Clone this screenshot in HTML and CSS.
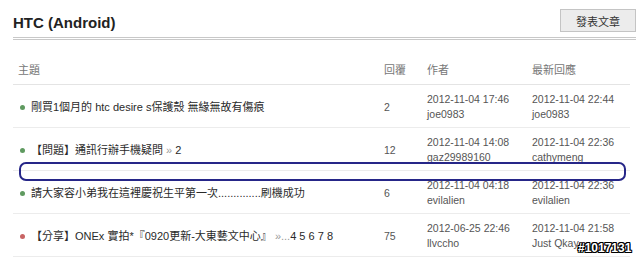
FILE: index.html
```html
<!DOCTYPE html>
<html lang="zh-Hant">
<head>
    <meta charset="UTF-8">
    <title>HTC (Android)</title>
    <link rel="stylesheet" href="styles.css">
</head>
<body>
    <div class="forum">
        <div class="forum-head">
            <h1>HTC (Android)</h1>
            <button class="post-btn">發表文章</button>
        </div>

        <table class="topics">
            <colgroup>
                <col class="col-topic">
                <col class="col-reply">
                <col class="col-author">
                <col class="col-last">
            </colgroup>
            <thead>
                <tr>
                    <th>主題</th>
                    <th>回覆</th>
                    <th>作者</th>
                    <th>最新回應</th>
                </tr>
            </thead>
            <tbody>
                <tr>
                    <td><span class="dot"></span><a href="#">剛買1個月的 htc desire s保護殼 無緣無故有傷痕</a></td>
                    <td>2</td>
                    <td>2012-11-04 17:46<br>joe0983</td>
                    <td>2012-11-04 22:44<br>joe0983</td>
                </tr>
                <tr>
                    <td><span class="dot"></span><a href="#">【問題】通訊行辦手機疑問</a> <span class="pages">» <a href="#">2</a></span></td>
                    <td>12</td>
                    <td>2012-11-04 14:08<br>gaz29989160</td>
                    <td>2012-11-04 22:36<br>cathymeng</td>
                </tr>
                <tr>
                    <td><span class="dot"></span><a href="#">請大家容小弟我在這裡慶祝生平第一次..............刷機成功</a></td>
                    <td>6</td>
                    <td>2012-11-04 04:18<br>evilalien</td>
                    <td>2012-11-04 22:36<br>evilalien</td>
                </tr>
                <tr>
                    <td><span class="dot hot"></span><a href="#">【分享】ONEx 實拍*『0920更新-大東藝文中心』</a> <span class="pages">»...<a href="#">4</a> <a href="#">5</a> <a href="#">6</a> <a href="#">7</a> <a href="#">8</a></span></td>
                    <td>75</td>
                    <td>2012-06-25 22:46<br>llvccho</td>
                    <td>2012-11-04 21:58<br>Just Qkay</td>
                </tr>
            </tbody>
        </table>

        <div class="mark"></div>
    </div>
    <div class="watermark">#1017131</div>
</body>
</html>
```

FILE: styles.css
```css
* {
    margin: 0;
    padding: 0;
    box-sizing: border-box;
}
body {
    font-family: "Liberation Sans", Arial, "Noto Sans CJK TC", sans-serif;
    font-size: 10.5px;
    color: #333;
    background-color: #fff;
    overflow: hidden;
}
a {
    color: #333;
    text-decoration: none;
}
.forum {
    position: relative;
    margin: 0 4px 0 13px;
}
.forum-head {
    display: flex;
    justify-content: space-between;
    align-items: center;
    padding: 9px 0 5px;
    border-bottom: 3px double #c8c8c8;
}
.forum-head h1 {
    align-self: flex-end;
    font-size: 15px;
    line-height: 18px;
    font-weight: bold;
    color: #222;
}
.post-btn {
    width: 76px;
    height: 23px;
    font-family: "Liberation Sans", "Noto Sans CJK TC", sans-serif;
    font-size: 11px;
    color: #333;
    background-color: #ececec;
    border: 1px solid #c4c4c4;
}
.topics {
    width: 617px;
    margin-top: 17px;
    border-collapse: collapse;
    table-layout: fixed;
}
.col-topic { width: 366px; }
.col-reply { width: 43px; }
.col-author { width: 105px; }
.col-last { width: 103px; }
.topics th {
    padding: 6px 5px;
    line-height: 15px;
    font-size: 11px;
    font-weight: normal;
    text-align: left;
    color: #777;
    border-bottom: 1px solid #e4e4e4;
}
.topics td {
    padding: 7px 5px 5px;
    line-height: 15px;
    color: #555;
    vertical-align: middle;
    white-space: nowrap;
    border-bottom: 1px solid #ececec;
}
.topics td:first-child {
    font-size: 11px;
}
.topics td:first-child a {
    color: #2a2a2a;
}
.topics .pages {
    color: #999;
}
.topics .pages a {
    color: #666;
}
.dot {
    display: inline-block;
    width: 5px;
    height: 5px;
    margin: 0 6px 1px 2px;
    border-radius: 50%;
    background-color: #5f9a60;
    vertical-align: middle;
}
.dot.hot {
    background-color: #c86464;
}
.mark {
    position: absolute;
    left: 6px;
    top: 162px;
    width: 607px;
    height: 19px;
    border: 2px solid #262688;
    border-radius: 7px;
}
.watermark {
    position: absolute;
    left: 578px;
    top: 241px;
    font-family: "Liberation Sans", Arial, sans-serif;
    font-size: 12px;
    line-height: 14px;
    font-weight: bold;
    color: #fff;
    text-shadow: 1px 0 #000, -1px 0 #000, 0 1px #000, 0 -1px #000,
                 1px 1px #000, -1px -1px #000, 1px -1px #000, -1px 1px #000;
}
```
